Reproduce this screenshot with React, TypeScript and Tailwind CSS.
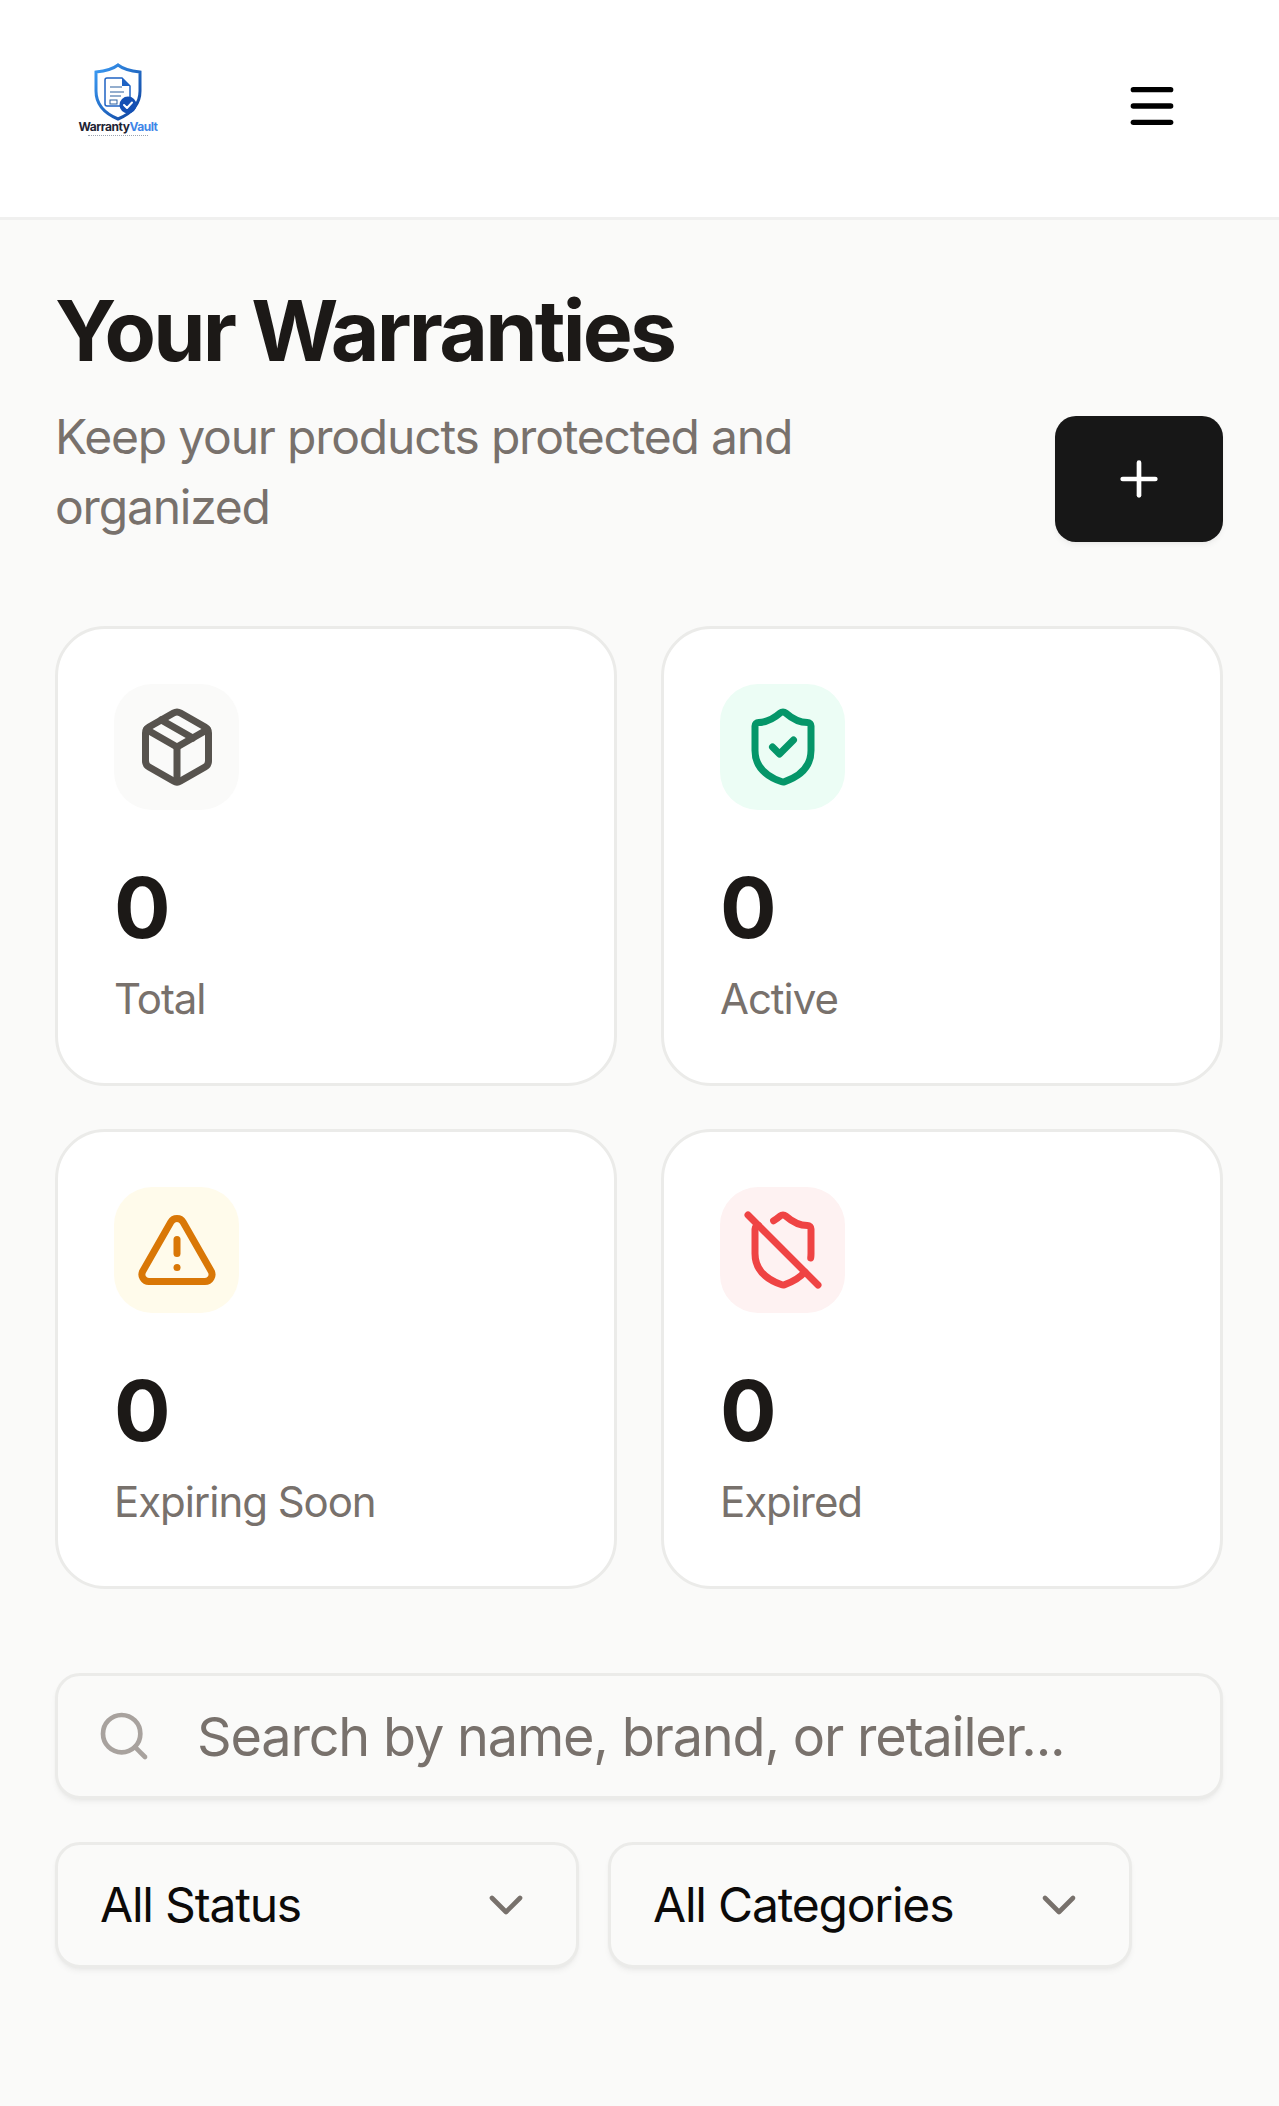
import React from "react";
import {
  ChevronDown,
  Menu,
  Package,
  Plus,
  Search,
  ShieldCheck,
  ShieldOff,
  TriangleAlert,
} from "lucide-react";

const Logo = () => (
  <div className="flex flex-col items-center w-[90px] mb-[10px]">
    <svg width="50" height="58" viewBox="0 0 50 58" fill="none">
      <defs>
        <linearGradient id="shieldGrad" x1="0" y1="0" x2="1" y2="1">
          <stop offset="0" stopColor="#3b9cf5" />
          <stop offset="1" stopColor="#0d3f9a" />
        </linearGradient>
      </defs>
      <path
        d="M25 2 C20 6 12 8 3 9 V28 C3 42 13 51 25 56 C37 51 47 42 47 28 V9 C38 8 30 6 25 2 Z"
        stroke="url(#shieldGrad)"
        strokeWidth="3"
        fill="#fff"
      />
      <path
        d="M14 15 H29 L37 23 V43 H14 Q12 43 12 41 V17 Q12 15 14 15 Z"
        stroke="#1f63c4"
        strokeWidth="1.5"
        fill="#fff"
      />
      <path d="M29 15 V23 H37 Z" fill="#1f63c4" />
      <path d="M17 24 H29 M17 29 H31 M17 33 H28" stroke="#2b5f9e" strokeWidth="1.2" />
      <rect x="17" y="37" width="7" height="4" stroke="#2b5f9e" strokeWidth="1" fill="#fff" />
      <circle cx="35" cy="42" r="8.5" fill="#1450b4" />
      <path d="M31 42 L34 45 L39 39.5" stroke="#fff" strokeWidth="2" strokeLinecap="round" strokeLinejoin="round" />
    </svg>
    <div className="mt-[-1px] text-[12px] leading-[13px] font-bold tracking-[-0.04em] whitespace-nowrap text-[#1e2333]">
      Warranty<span className="text-[#3f86e8]">Vault</span>
    </div>
    <div className="mt-[2px] h-[3px] w-[60px] border-t-[1px] border-dotted border-[#9ca3af]" />
  </div>
);

const stats = [
  { label: "Total", icon: Package, bg: "bg-[#fafaf9]", color: "text-[#57534e]" },
  { label: "Active", icon: ShieldCheck, bg: "bg-[#ecfdf5]", color: "text-[#059669]" },
  { label: "Expiring Soon", icon: TriangleAlert, bg: "bg-[#fffbeb]", color: "text-[#d97706]" },
  { label: "Expired", icon: ShieldOff, bg: "bg-[#fef2f2]", color: "text-[#ef4444]" },
];

const FilterButton = ({ label, className }: { label: string; className: string }) => (
  <button
    className={`flex items-center justify-between h-[126px] pl-[42px] pr-[42px] bg-[#fafaf9] border-[3px] border-[#ebebe9] rounded-[25px] shadow-md shadow-black/5 text-[48px] tracking-[-0.025em] text-[#0c0a09] ${className}`}
  >
    <span>{label}</span>
    <ChevronDown size={56} className="text-[#78716c]" strokeWidth={2} />
  </button>
);

export default function App() {
  return (
    <div className="min-h-screen bg-[#fafaf9] font-['Inter',sans-serif]">
      <header className="flex items-center justify-between h-[220px] pb-[6px] bg-white border-b-[3px] border-[#f0f0ef] pl-[73px] pr-[99px]">
        <Logo />
        <Menu size={56} strokeWidth={2.3} className="text-black" />
      </header>

      <main className="pl-[55px] pr-[56px]">
        <h1 className="mt-[61px] text-[84px] leading-[100px] font-bold tracking-[-0.033em] text-[#1c1917]">
          Your Warranties
        </h1>
        <div className="flex items-end justify-between mt-[21px]">
          <p className="w-[800px] text-[48px] leading-[70px] tracking-[-0.025em] text-[#78716c]">
            Keep your products protected and organized
          </p>
          <button className="flex items-center justify-center w-[168px] h-[126px] rounded-[21px] bg-[#171717] text-white shadow-md shadow-black/5">
            <Plus size={56} />
          </button>
        </div>

        <div className="grid grid-cols-2 gap-x-[44px] gap-y-[43px] mt-[84px]">
          {stats.map((stat) => (
            <div
              key={stat.label}
              className="h-[460px] bg-white border-[3px] border-[#ebebe9] rounded-[50px] pt-[55px] pl-[56px] pr-[55px]"
            >
              <div className={`flex items-center justify-center w-[125px] h-[126px] rounded-[38px] ${stat.bg}`}>
                <stat.icon size={84} className={stat.color} />
              </div>
              <div className="mt-[48px] text-[84px] leading-[100px] font-bold text-[#1c1917]">0</div>
              <div className="mt-[11px] text-[42px] leading-[60px] tracking-[-0.025em] text-[#78716c]">
                {stat.label}
              </div>
            </div>
          ))}
        </div>

        <div className="flex items-center gap-[45px] h-[126px] mt-[84px] pl-[38px] pr-[40px] bg-[#fafaf9] border-[3px] border-[#ebebe9] rounded-[25px] shadow-md shadow-black/5">
          <Search size={56} className="shrink-0 text-[#a8a29e]" />
          <input
            className="flex-1 min-w-0 bg-transparent outline-none text-[54px] tracking-[-0.022em] placeholder:text-[#78716c]"
            placeholder="Search by name, brand, or retailer..."
          />
        </div>

        <div className="flex gap-[29px] mt-[43px]">
          <FilterButton label="All Status" className="w-[524px]" />
          <FilterButton label="All Categories" className="w-[524px]" />
        </div>
      </main>
    </div>
  );
}
